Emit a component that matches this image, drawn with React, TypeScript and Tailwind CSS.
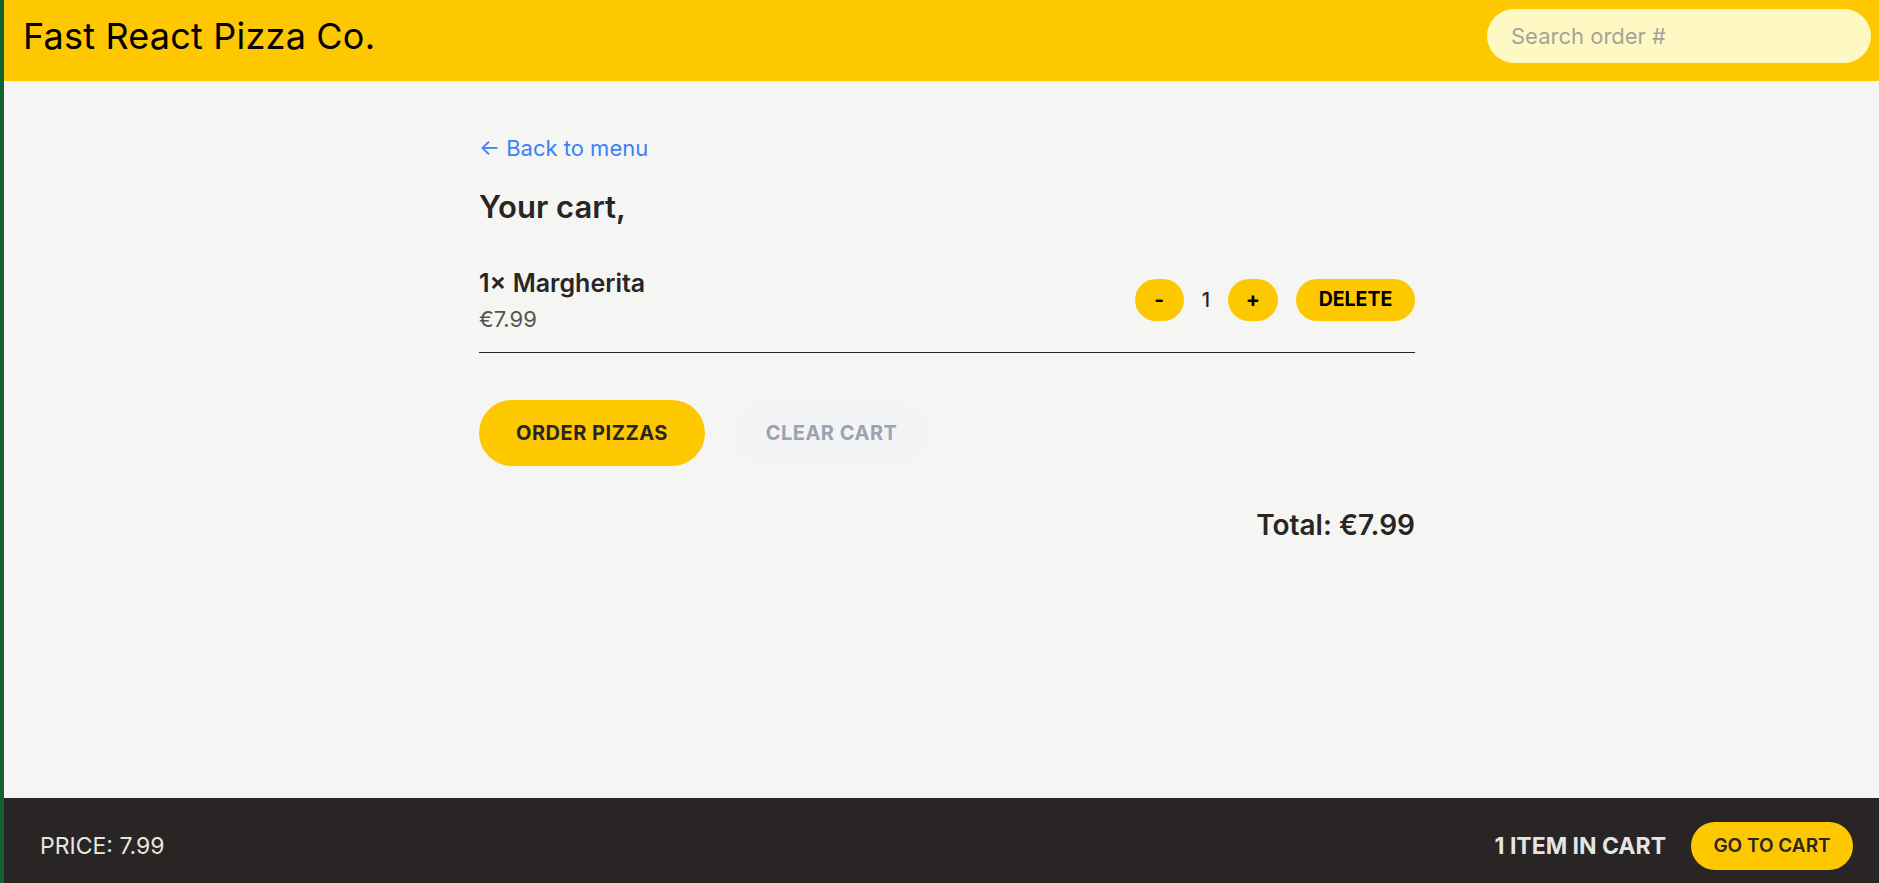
import React from "react";

export default function App() {
  return (
    <div
      className="flex h-[883px] w-full overflow-hidden bg-[#f5f5f4] text-[#292524]"
      style={{ fontFamily: "Inter, 'Noto Sans', sans-serif" }}
    >
      <div className="w-1 shrink-0 bg-[#126330]" />
      <div className="flex min-w-0 flex-1 flex-col">
        <header className="flex h-[81px] shrink-0 items-start justify-between bg-[#fec800] pl-[19px] pr-2 pt-[9px]">
          <div className="flex h-[54px] items-center text-[36px] leading-none tracking-[0.2px] text-black">
            Fast React Pizza Co.
          </div>
          <input
            placeholder="Search order #"
            className="h-[54px] w-[384px] rounded-full bg-[#fef9c2] px-6 text-[22px] text-stone-700 outline-none placeholder:text-[#a8a29e]"
          />
        </header>

        <main className="flex-1">
          <div className="ml-[475px] w-[936px] pt-[52px]">
            <a className="block text-[22px] leading-[30px] text-[#3b82f6]" href="#">
              ← Back to menu
            </a>
            <h2 className="mt-[23px] text-[31px] font-semibold leading-[42px]">Your cart,</h2>

            <ul className="mt-[37px] border-b border-[#292524]">
              <li className="flex items-center justify-between pb-[18px]">
                <div>
                  <p className="text-[25px] font-semibold leading-[36px]">1× Margherita</p>
                  <p className="mt-[3px] text-[22px] leading-[30px] text-[#57534e]">€7.99</p>
                </div>
                <div className="flex items-center gap-[18px]">
                  <div className="flex items-center gap-[18px]">
                    <button className="flex h-[42px] w-[49px] items-center justify-center rounded-full bg-[#fec800] text-[21px] font-bold text-black">
                      -
                    </button>
                    <span className="text-[20px] font-medium">1</span>
                    <button className="flex h-[42px] w-[50px] items-center justify-center rounded-full bg-[#fec800] text-[21px] font-bold text-black">
                      +
                    </button>
                  </div>
                  <button className="flex h-[42px] w-[119px] items-center justify-center rounded-full bg-[#fec800] text-[19.5px] font-bold text-black">
                    DELETE
                  </button>
                </div>
              </li>
            </ul>

            <div className="mt-[47px] flex items-center gap-[25px]">
              <button className="flex h-[66px] w-[226px] items-center justify-center rounded-full bg-[#fec800] text-[20px] font-bold tracking-wide text-[#292524]">
                ORDER PIZZAS
              </button>
              <button className="flex h-[66px] w-[203px] items-center justify-center rounded-full bg-[#f3f4f6] text-[20px] font-bold tracking-wide text-[#9ca3af]">
                CLEAR CART
              </button>
            </div>

            <p className="mt-[41px] text-right text-[28px] font-semibold leading-[36px]">
              Total: €7.99
            </p>
          </div>
        </main>

        <footer className="flex h-[85px] shrink-0 items-start justify-between bg-[#292524] pl-9 pr-[26px] pt-6">
          <div className="flex h-12 items-center text-[23px] text-[#e7e5e4]">PRICE: 7.99</div>
          <div className="flex h-12 items-center gap-[25px]">
            <span className="text-[23px] font-bold text-[#e7e5e4]">1 ITEM IN CART</span>
            <button className="flex h-12 w-[162px] items-center justify-center rounded-full bg-[#fec800] text-[19px] font-semibold text-[#292524]">
              GO TO CART
            </button>
          </div>
        </footer>
      </div>
    </div>
  );
}
